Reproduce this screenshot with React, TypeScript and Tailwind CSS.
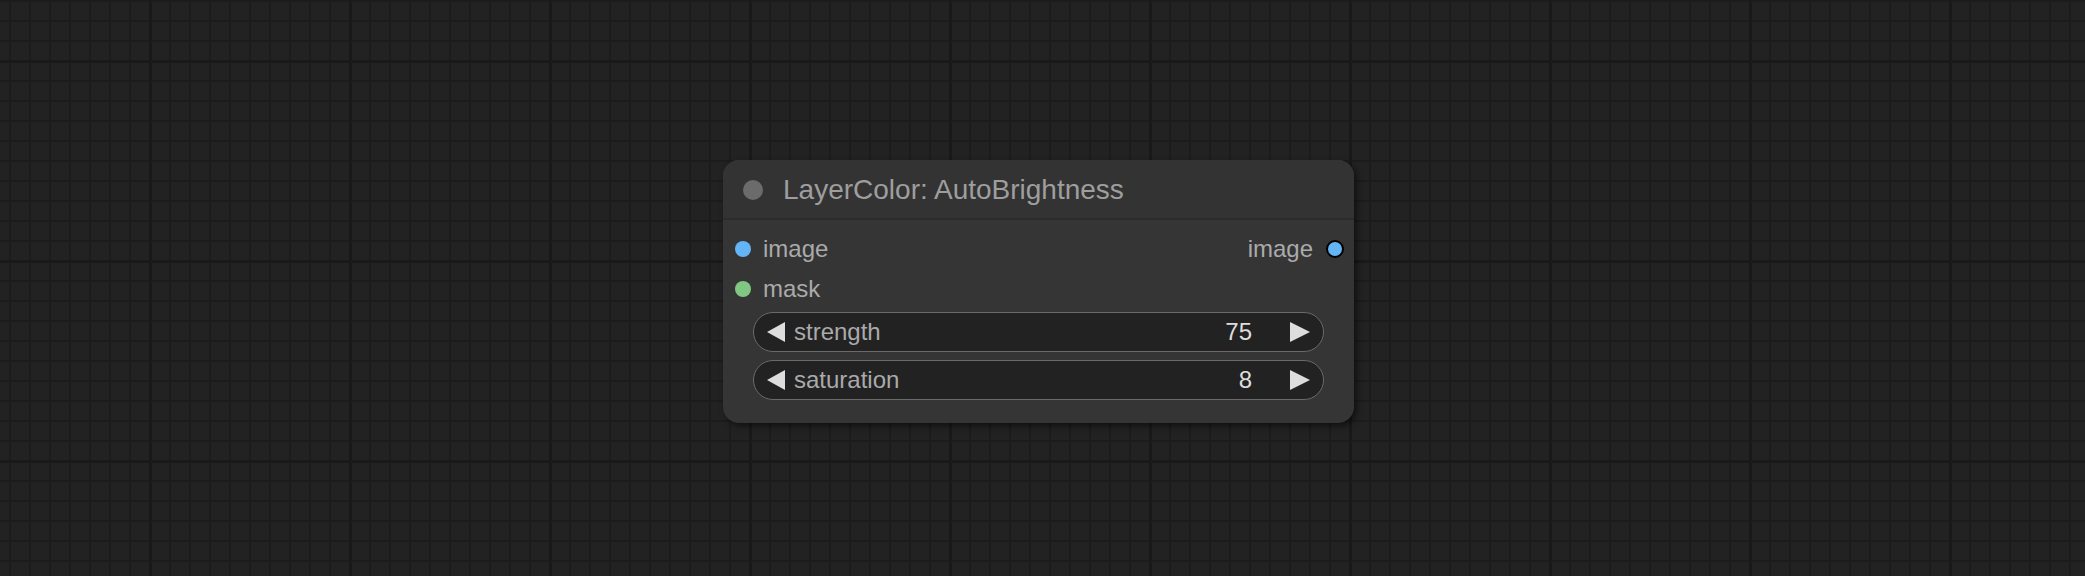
const inputs = [
  { name: "image", color: "bg-[#64b5f6]" },
  { name: "mask", color: "bg-[#81c784]" },
];

const widgets = [
  { name: "strength", value: "75" },
  { name: "saturation", value: "8" },
];

const ArrowLeft = () => (
  <svg width="18" height="20" viewBox="0 0 18 20" className="shrink-0">
    <polygon points="18,0 18,20 0,10" fill="#dddddd" />
  </svg>
);

const ArrowRight = () => (
  <svg width="20" height="20" viewBox="0 0 20 20" className="shrink-0">
    <polygon points="0,0 0,20 20,10" fill="#dddddd" />
  </svg>
);

const NumberWidget = ({ name, value }: { name: string; value: string }) => {
  return (
    <div className="mx-[30px] flex h-[40px] items-center rounded-full border border-[#6a6a6a] bg-[#222222] pl-[13px] pr-[13px] text-[24px]">
      <ArrowLeft />
      <span className="ml-[9px] text-[#aaaaaa]">{name}</span>
      <span className="ml-auto text-[#dddddd]">{value}</span>
      <span className="ml-[38px]">
        <ArrowRight />
      </span>
    </div>
  );
};

const App = () => {
  return (
    <div className="relative h-[576px] w-[2085px] overflow-hidden bg-[#222222] bg-[image:linear-gradient(to_right,#191919_3px,transparent_3px),linear-gradient(to_bottom,#191919_3px,transparent_3px),linear-gradient(to_right,#1c1c1c_2px,transparent_2px),linear-gradient(to_bottom,#1c1c1c_2px,transparent_2px)] bg-size-[200px_200px,200px_200px,20px_20px,20px_20px] bg-position-[149px_60px,149px_60px,9px_0px,9px_0px] font-['Liberation_Sans',Arial,sans-serif]">
      <div className="absolute left-[723px] top-[160px] flex h-[263px] w-[631px] flex-col overflow-hidden rounded-[16px] bg-[#353535] shadow-[3px_3px_6px_rgba(0,0,0,0.5)]">
        <div className="flex h-[60px] shrink-0 items-center border-b-2 border-[#2c2c2c] bg-[#333333] pl-[20px] pt-[2px]">
          <div className="h-[20px] w-[20px] rounded-full bg-[#6b6b6b]" />
          <span className="ml-[20px] text-[28px] text-[#9e9e9e]">
            LayerColor: AutoBrightness
          </span>
        </div>
        <div className="flex flex-col pt-[9px]">
          {inputs.map((slot, i) => (
            <div key={slot.name} className="flex h-[40px] items-center pl-[12px] pr-[10px]">
              <div className={`h-[16px] w-[16px] rounded-full ${slot.color}`} />
              <span className="ml-[12px] text-[24px] text-[#aaaaaa]">{slot.name}</span>
              {i === 0 && (
                <>
                  <span className="ml-auto text-[24px] text-[#aaaaaa]">image</span>
                  <div className="ml-[13px] h-[18px] w-[18px] rounded-full border-2 border-black bg-[#64b5f6]" />
                </>
              )}
            </div>
          ))}
          <div className="mt-[3px] flex flex-col gap-[8px]">
            {widgets.map((w) => (
              <NumberWidget key={w.name} name={w.name} value={w.value} />
            ))}
          </div>
        </div>
      </div>
    </div>
  );
};

export default App;
